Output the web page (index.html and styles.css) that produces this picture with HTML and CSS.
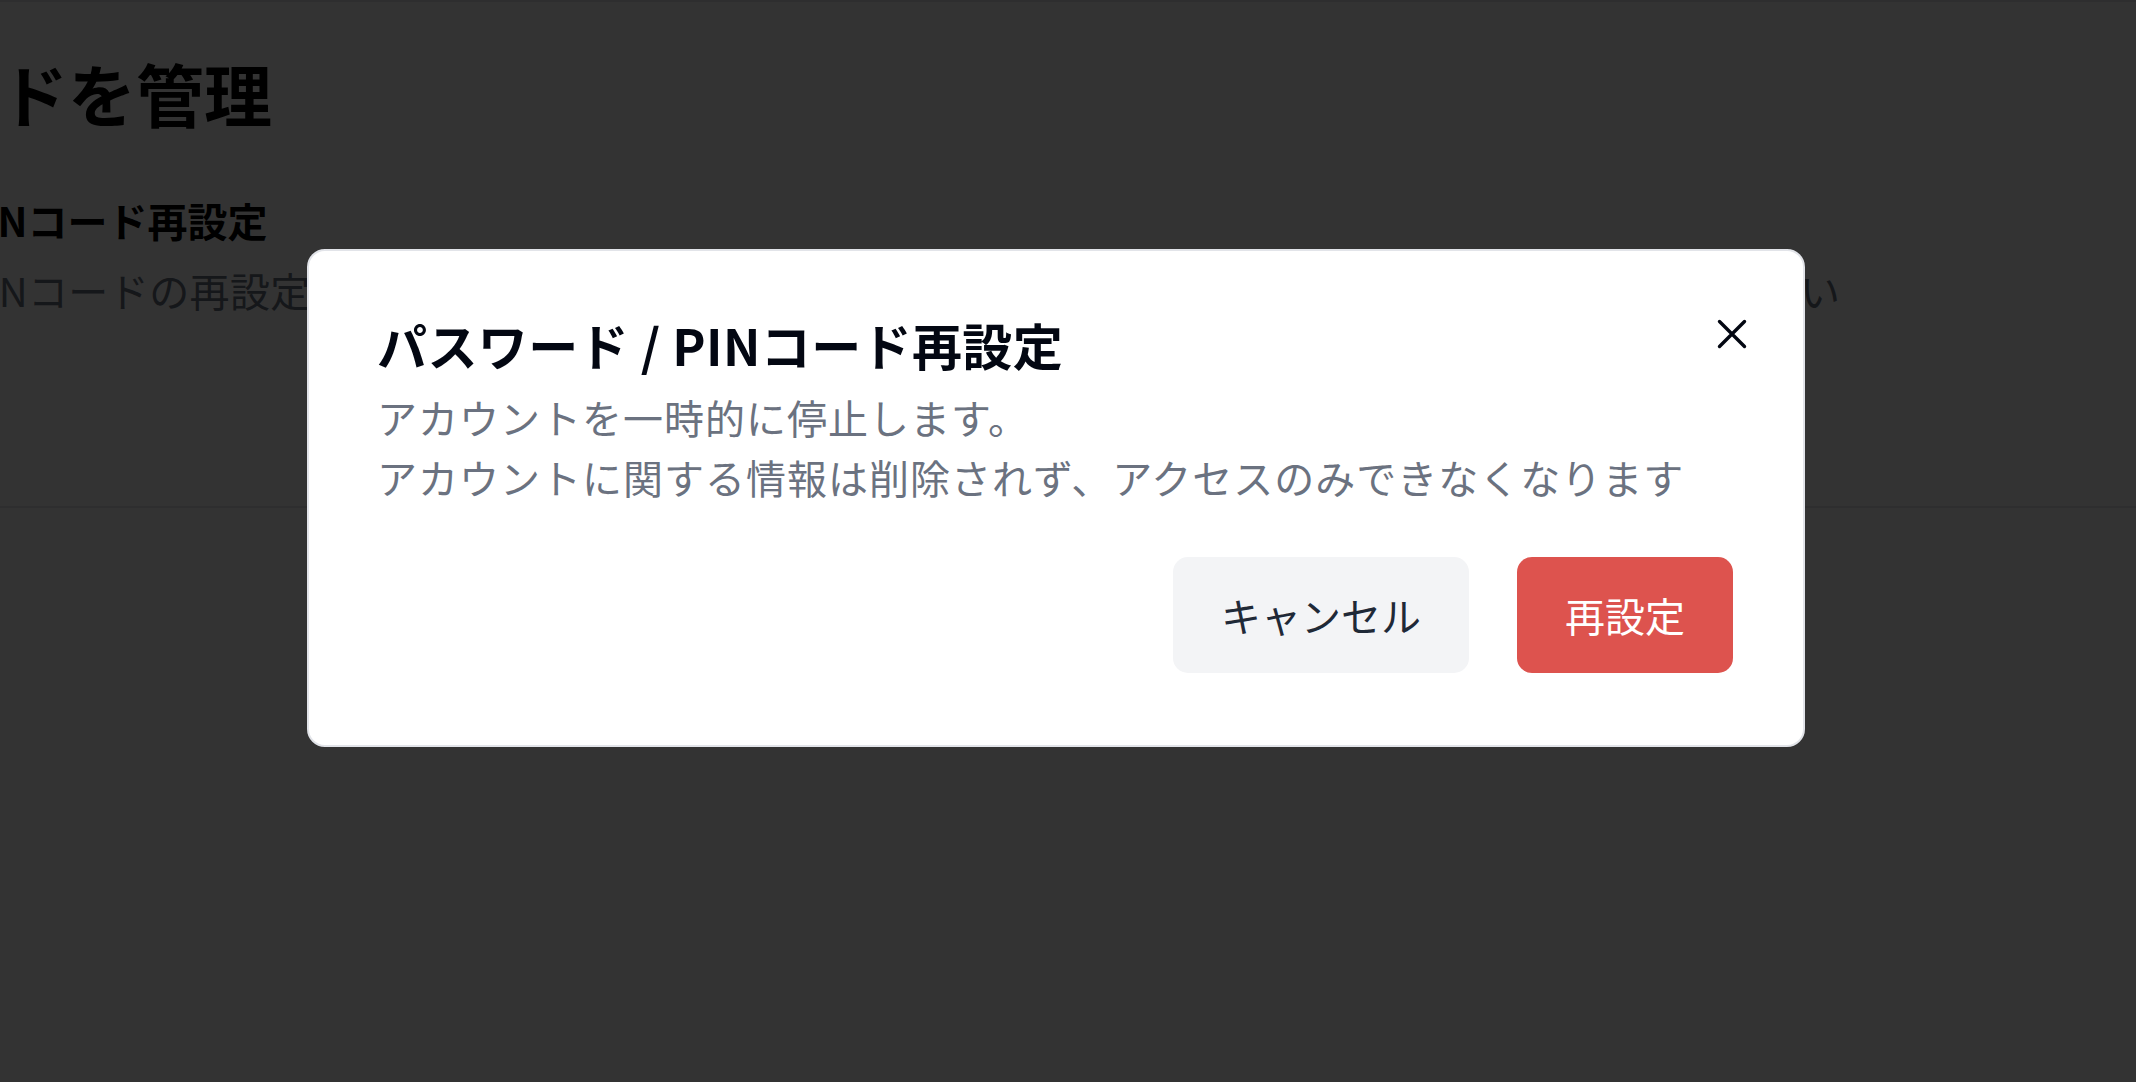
FILE: index.html
```html
<!DOCTYPE html>
<html lang="ja">
<head>
<meta charset="utf-8">
<title>パスワードを管理</title>
<link rel="stylesheet" href="styles.css">
</head>
<body>
  <main class="page">
    <div class="content">
      <h1 class="page-title">パスワードを管理</h1>
      <section class="setting">
        <h2 class="setting-title">パスワード / PINコード再設定</h2>
        <p class="setting-desc">パスワード / PINコードの再設定を行います。再設定のご案内をメールアドレスにお送りしますので、ご確認ください</p>
      </section>
    </div>
  </main>

  <div class="overlay">
    <div class="modal" role="dialog" aria-modal="true" aria-labelledby="modal-title">
      <button class="modal-close" type="button" aria-label="閉じる">
        <svg viewBox="0 0 32 32" width="32" height="32" aria-hidden="true">
          <path d="M3.5 3.5 L28.5 28.5 M28.5 3.5 L3.5 28.5" fill="none" stroke="currentColor" stroke-width="3.4" stroke-linecap="round"/>
        </svg>
      </button>
      <h2 class="modal-title" id="modal-title">パスワード / PINコード再設定</h2>
      <p class="modal-text">アカウントを一時的に停止します。<br>アカウントに関する情報は削除されず、アクセスのみできなくなります</p>
      <div class="modal-actions">
        <button class="btn btn-secondary" type="button">キャンセル</button>
        <button class="btn btn-danger" type="button">再設定</button>
      </div>
    </div>
  </div>
</body>
</html>
```

FILE: styles.css
```css
* {
  box-sizing: border-box;
}

html,
body {
  margin: 0;
  height: 100%;
}

body {
  background: #ffffff;
  color: #111111;
  font-family: "Noto Sans CJK JP", "Noto Sans", sans-serif;
  overflow: hidden;
}

/* underlying settings page */
.page {
  border-top: 2px solid #e5e7eb;
  border-bottom: 2px solid #e5e7eb;
  padding: 40px 0 186px;
}

.content {
  margin-left: -272px;
}

.page-title {
  margin: 0 0 46px;
  font-size: 68px;
  line-height: 102px;
  font-weight: 700;
  color: #000000;
}

.setting {
  margin-left: -4px;
}

.setting-title {
  margin: 0 0 10px;
  font-size: 40px;
  line-height: 60px;
  font-weight: 700;
  color: #000000;
}

.setting-desc {
  margin: 0;
  font-size: 40px;
  line-height: 60px;
  font-weight: 400;
  letter-spacing: 0.4px;
  color: #6b7280;
  white-space: nowrap;
}

/* dialog backdrop */
.overlay {
  position: fixed;
  inset: 0;
  background: rgba(0, 0, 0, 0.8);
  display: flex;
  align-items: flex-start;
  justify-content: flex-start;
  padding: 249px 0 0 307px;
}

.modal {
  position: relative;
  width: 1498px;
  background: #ffffff;
  border: 2px solid #e2e4e9;
  border-radius: 18px;
  padding: 58px 70px 72px 68px;
}

.modal-close {
  position: absolute;
  top: 67px;
  right: 55px;
  width: 32px;
  height: 32px;
  padding: 0;
  border: 0;
  background: none;
  color: #030712;
  display: flex;
}

.modal-title {
  margin: 0 0 8px;
  font-size: 50px;
  line-height: 70px;
  font-weight: 700;
  letter-spacing: 0.4px;
  color: #030712;
}

.modal-text {
  margin: 0;
  font-size: 40px;
  line-height: 60px;
  letter-spacing: 1px;
  color: #6b7280;
}

.modal-actions {
  margin-top: 50px;
  display: flex;
  justify-content: flex-end;
  gap: 48px;
}

.btn {
  height: 116px;
  padding: 0 48px;
  border: 0;
  border-radius: 15px;
  font-family: inherit;
  font-size: 40px;
  line-height: 60px;
  font-weight: 400;
}

.btn-secondary {
  background: #f3f4f6;
  color: #1f2937;
}

.btn-danger {
  background: #dd534e;
  color: #ffffff;
}
```
